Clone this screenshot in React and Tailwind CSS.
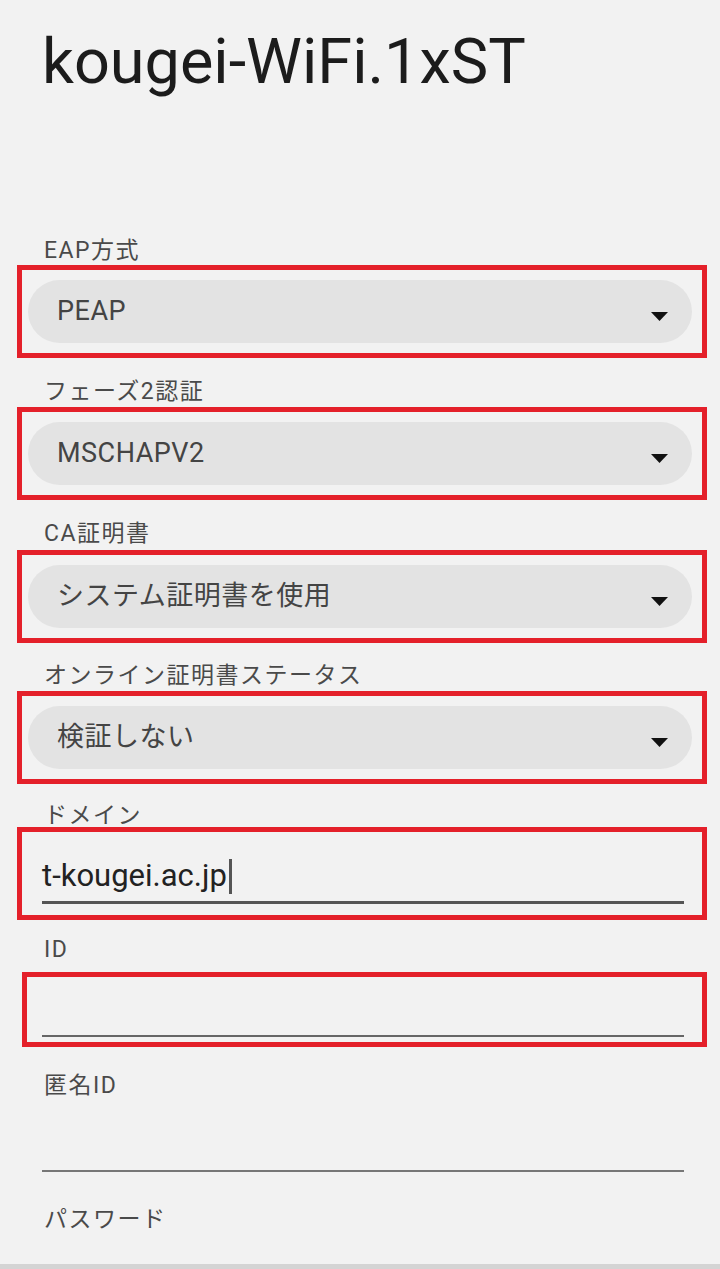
const font = { fontFamily: 'Roboto, "Noto Sans CJK JP", sans-serif' };

const Label = ({ children, className = '' }) => (
  <div className={`h-[28px] leading-[28px] pl-[44px] text-[23px] tracking-[1.5px] text-[#4a4a4a] ${className}`}>
    {children}
  </div>
);

const Arrow = () => (
  <svg width="17" height="9" viewBox="0 0 17 9" className="mt-[10px]">
    <path d="M0 0 L17 0 L8.5 9 Z" fill="#111" />
  </svg>
);

const SelectField = ({ label, value, gap = 'mt-0', top = 'mt-[20px]' }) => (
  <div className={top}>
    <Label>{label}</Label>
    <div className={`${gap} mx-[17px] w-[690px] border-[5px] border-[#e4202a] pl-[6px] pr-[10px] pt-[10px] pb-[10px]`}>
      <div className="h-[63px] rounded-full bg-[#e3e3e3] flex items-center justify-between pl-[29px] pr-[24px]">
        <span className="text-[27px] tracking-[0.5px] text-[#444]">{value}</span>
        <Arrow />
      </div>
    </div>
  </div>
);

export default function App() {
  return (
    <div className="min-h-[1269px] bg-[#f2f2f2] flex flex-col" style={font}>
      <h1 className="pt-[30px] pl-[42px] text-[63px] leading-[63px] text-[#1c1c1c] font-normal">
        kougei-WiFi.1xST
      </h1>

      <SelectField label="EAP方式" value="PEAP" top="mt-[144px]" />
      <SelectField label="フェーズ2認証" value="MSCHAPV2" gap="mt-[1px]" />
      <SelectField label="CA証明書" value="システム証明書を使用" gap="mt-[2px]" />
      <SelectField label="オンライン証明書ステータス" value="検証しない" gap="mt-[1px]" top="mt-[19px]" />

      {/* ドメイン */}
      <div className="mt-[18px]">
        <Label>ドメイン</Label>
        <div className="relative -mt-[3px] mx-[17px] w-[690px] h-[93px] border-[5px] border-[#e4202a] pl-[20px] pr-[18px] pt-[22px]">
          <div className="h-[44px] flex items-center">
            <span className="text-[31px] text-[#222]">t-kougei.ac.jp</span>
            <span className="ml-[2px] w-[3px] h-[35px] bg-[#555]" />
          </div>
          <div className="mt-[3px] h-[3px] bg-[#555]" />
        </div>
      </div>

      {/* ID */}
      <div className="mt-[16px]">
        <Label>ID</Label>
        <div className="mt-[8px] ml-[22px] w-[685px] h-[75px] border-[5px] border-[#e4202a] pl-[15px] pr-[18px] pt-[58px]">
          <div className="h-[2px] bg-[#666]" />
        </div>
      </div>

      {/* 匿名ID */}
      <div className="mt-[25px]">
        <Label>匿名ID</Label>
        <div className="mt-[70px] ml-[42px] w-[642px] h-[2px] bg-[#777]" />
      </div>

      <div className="mt-[34px]">
        <Label>パスワード</Label>
      </div>

      <div className="flex-1" />
      <div className="h-[5px] bg-[#d4d4d4]" />
    </div>
  );
}
